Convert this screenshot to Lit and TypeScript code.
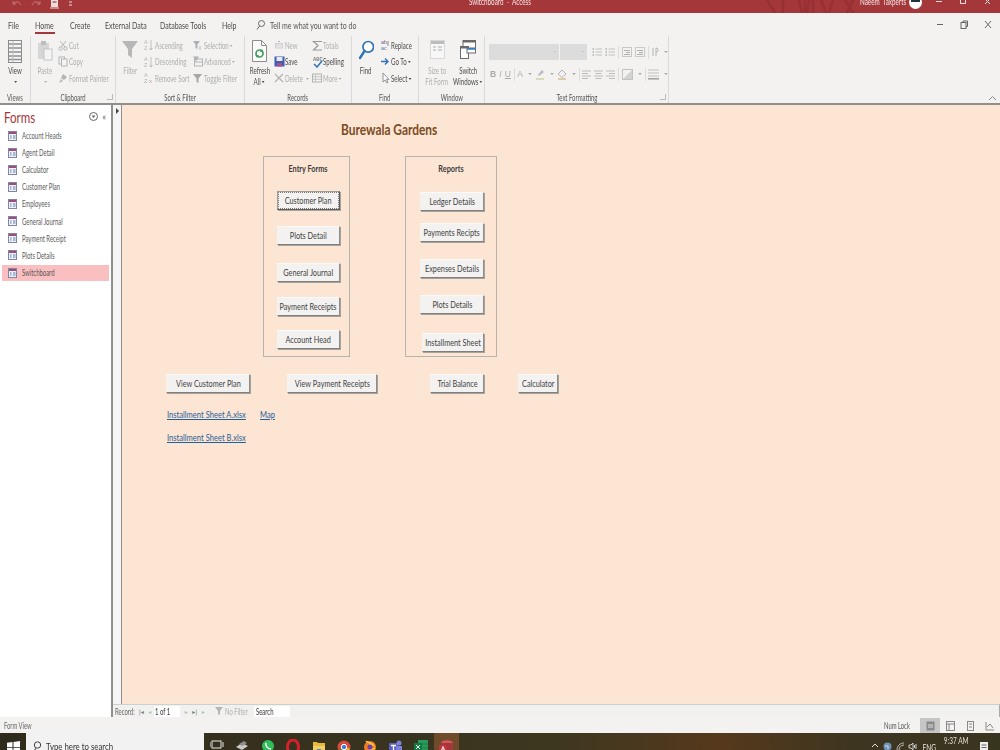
import { LitElement, html, css, svg } from "lit";
import { customElement } from "lit/decorators.js";

const s = (w: number, h: number, body: unknown, cls = "") =>
  html`<svg class=${cls} width=${w} height=${h} viewBox="0 0 ${w} ${h}" fill="none">${body}</svg>`;

const G = "#b4b4b4";
const B = "#2f74b5";

const icons: Record<string, () => unknown> = {
  view: () => s(14, 23, svg`<rect x=".5" y=".5" width="13" height="22" fill="#f4f4f4" stroke="#8c8c8c"/>
    <path d="M1 4h12M1 8h12M1 12h12M1 16h12M1 19.500h12" stroke="#8f8f8f" stroke-width="1.400"/><path d="M5 1v21" stroke="#bbb"/>`),
  paste: () => s(16, 21, svg`<rect x="1" y="3" width="11" height="16" fill="#d6d6d6"/><rect x="4" y="1" width="5" height="4" fill="#bdbdbd"/>
    <rect x="7" y="9" width="8" height="11" fill="#f4f4f4" stroke="#c4c4c4"/>`),
  cut: () => s(10, 11, svg`<path d="M2 1l5 6M8 1L3 7" stroke=${G}/><circle cx="2.500" cy="8.500" r="1.700" stroke=${G}/><circle cx="7.500" cy="8.500" r="1.700" stroke=${G}/>`),
  copy: () => s(10, 11, svg`<rect x="1" y="1" width="5.500" height="7" stroke=${G} fill="#f4f4f4"/><rect x="3.500" y="3" width="5.500" height="7" stroke=${G} fill="#f4f4f4"/>`),
  painter: () => s(10, 11, svg`<path d="M5 1l4 3-3 3-3-2zM3 6L1 10l4-2" fill=${G}/>`),
  funnel: () => s(16, 19, svg`<path d="M0 1h16l-6 8v9l-4-3V9z" fill="#b7b7b7"/>`),
  asc: () => s(9, 12, svg`<text x="0" y="5" font-size="5.500" fill=${G} font-family="Liberation Sans">A</text><text x="0" y="11" font-size="5.500" fill=${G} font-family="Liberation Sans">Z</text><path d="M7 1v10M5.500 9L7 11l1.500-2" stroke=${G} stroke-width=".8"/>`),
  rsort: () => s(9, 12, svg`<text x="0" y="5" font-size="5.500" fill=${G} font-family="Liberation Sans">A</text><text x="0" y="11" font-size="5.500" fill=${G} font-family="Liberation Sans">Z</text><path d="M5 8l3 3M8 8l-3 3" stroke="#cfa9a9" stroke-width=".8"/>`),
  sel: () => s(9, 11, svg`<path d="M0 1h7L4.500 4.500V9l-2-1V4.500z" fill="#aab0b8"/><path d="M7 6v4" stroke=${G}/>`),
  adv: () => s(10, 11, svg`<rect x="1.500" y="3" width="8" height="7" stroke=${G}/><path d="M0 .5h6L3.500 4v2L2.500 5V4z" fill="#aab0b8"/><path d="M1.500 6h8" stroke=${G}/>`),
  tog: () => s(9, 11, svg`<path d="M0 1h9L5.500 5.500V10l-2-1V5.500z" fill="#a6a6a6"/>`),
  refresh: () => s(15, 22, svg`<path d="M.5.500h9l5 5v16H.5z" fill="#fafafa" stroke="#8e8e8e"/><path d="M9.500.500v5h5" stroke="#8e8e8e"/>
    <circle cx="7.500" cy="13.500" r="3.500" stroke="#3f9d59" stroke-width="1.700"/><path d="M10 9l1.500 3H8zM5 18l-1.500-3H7z" fill="#3f9d59"/>`),
  snew: () => s(10, 10, svg`<rect x="1" y="3" width="8" height="5.500" fill="#d0d0d0"/><path d="M2 5h6M2 7h6" stroke="#f2f2f2"/><path d="M4 1.500h2" stroke=${G}/>`),
  save: () => s(11, 11, svg`<rect x=".5" y=".5" width="10" height="10" fill="#3d5fb0"/><rect x="2.500" y="1" width="6" height="4" fill="#e8e8f4"/><rect x="3" y="7" width="5" height="3.500" fill="#b24d8f"/>`),
  del: () => s(10, 10, svg`<path d="M1 1l8 8M9 1L1 9" stroke="#b0b0b0" stroke-width="1.100"/>`),
  more: () => s(10, 10, svg`<rect x=".5" y="1" width="9" height="8" stroke=${G}/><path d="M.5 3.700h9M.5 6.300h9M3.500 1v8" stroke=${G} stroke-width=".7"/>`),
  sigma: () => s(11, 11, svg`<path d="M10 1.500H1.500L6 5.500l-4.500 4.500H10" stroke="#9a9a9a" stroke-width="1.200"/>`),
  spell: () => s(11, 12, svg`<text x="1" y="4.500" font-size="4.500" fill="#777" font-weight="700" font-family="Liberation Sans">ABC</text><path d="M2 8l3 3 5-6" stroke="#2f74b5" stroke-width="1.500"/>`),
  find: () => s(15, 20, svg`<circle cx="9.200" cy="6.800" r="5.300" stroke=${B} stroke-width="1.700" fill="#fff"/><path d="M5.500 11L1 18" stroke=${B} stroke-width="2.400" stroke-linecap="round"/>`),
  replace: () => s(10, 12, svg`<text x="1" y="5" font-size="5.500" fill="#7a5a8a" font-family="Liberation Sans">ab</text><text x="1" y="11" font-size="5.500" fill="#5b7fa8" font-family="Liberation Sans">ac</text><path d="M8 2v5" stroke="#888"/>`),
  goto: () => s(10, 9, svg`<path d="M1 4.500h7M5 1.500l3 3-3 3" stroke=${B} stroke-width="1.400"/>`),
  select: () => s(10, 12, svg`<path d="M3 1v9l2.300-2 1.500 3 1.200-.6-1.400-3H9z" fill="#fafafa" stroke="#7c7c7c" stroke-width=".8"/>`),
  fit: () => s(15, 19, svg`<rect x=".5" y=".5" width="14" height="18" fill="#f7f7f7" stroke="#bbb" stroke-dasharray="1 1"/><rect x="1" y="1" width="13" height="3" fill="#bcbcbc"/><path d="M3 7h3M8 7h4M3 10h3M8 10h4" stroke="#c6c6c6" stroke-width="1.300"/>`),
  sw: () => s(16, 19, svg`<rect x="3" y=".5" width="12.500" height="8" fill="#fff" stroke="#6a6a6a"/><rect x="3" y=".5" width="12.500" height="2" fill="#6a6a6a"/>
    <rect x=".5" y="6.500" width="8" height="12" fill="#fff" stroke="#6a6a6a"/><rect x=".5" y="6.500" width="8" height="2" fill="#6a6a6a"/><rect x="7" y="8" width="8.500" height="5" fill="#fff" stroke="#6a6a6a"/><rect x="7" y="8" width="8.500" height="1.800" fill="#3f7fc0"/>`),
  bul: () => s(10, 10, svg`<path d="M3.500 2H10M3.500 5H10M3.500 8H10" stroke="#c2c2c2"/><path d="M.5 2h1.500M.5 5h1.500M.5 8h1.500" stroke="#b0b0b0" stroke-width="1.300"/>`),
  ind: () => s(10, 10, svg`<rect x=".5" y=".5" width="9" height="9" stroke="#c8c8c8"/><path d="M2 3.500h6M4 5.500h4M2 7.500h6" stroke="#b0b0b0"/>`),
  rtl: () => s(7, 10, svg`<path d="M1 1v8M4 1v8M4 1c3 0 3 4 0 4" stroke="#b4b4b4"/>`),
  bucket: () => s(10, 11, svg`<path d="M5 1l4 4-4 3.500L1 5z" stroke="#b4b4b4"/><path d="M1 10h8" stroke="#d7c089" stroke-width="1.500"/>`),
  hl: () => s(10, 11, svg`<path d="M3 6l4-5 2 2-5 4z" fill="#b8b8b8"/><path d="M1 10h8" stroke="#cfd3a4" stroke-width="1.500"/>`),
  alignl: () => s(9, 9, svg`<path d="M0 1h9M0 3.500h6M0 6h9M0 8.500h6" stroke="#bcbcbc"/>`),
  alignc: () => s(9, 9, svg`<path d="M0 1h9M1.500 3.500h6M0 6h9M1.500 8.500h6" stroke="#bcbcbc"/>`),
  alignr: () => s(9, 9, svg`<path d="M0 1h9M3 3.500h6M0 6h9M3 8.500h6" stroke="#bcbcbc"/>`),
  fillg: () => s(11, 11, svg`<rect x=".5" y=".5" width="10" height="10" stroke="#c2c2c2"/><path d="M1 10l9-9v9z" fill="#d2d2d2"/>`),
  grid: () => s(11, 11, svg`<path d="M0 1h11M0 4h11M0 7h11" stroke="#c0c0c0"/><path d="M0 9.800h11" stroke="#9e9e9e" stroke-width="1.500"/>`),
  form: () => s(9, 10, svg`<rect x=".5" y=".5" width="8" height="9" fill="#eef1f6" stroke="#7f84a8"/><rect x="1" y="1" width="7" height="2" fill="#a04d75"/><path d="M2 5h1.500M5 5h2.500M2 7h1.500M5 7h2.500" stroke="#5e7fb4"/>`),
  win: () => s(13, 13, svg`<path d="M0 1.800l5.500-.8v5.200H0zM6.500.9L13 0v6.200H6.500zM0 7h5.500v5.200L0 11.400zM6.500 7H13v6l-6.500-.9z" fill="#fff"/>`),
};

const ic = (n: string) => icons[n]();
const car = html`<i class="car"></i>`;
/* The reference is squeezed horizontally, so each label is narrowed the same way. */
const q = (t: unknown) => html`<span class="q">${t}</span>`;
const qc = (t: unknown) => html`<span class="q qc">${t}</span>`;

const big = (icon: string, lines: unknown[], off = false) =>
  html`<div class="big ${off ? "off" : ""}"><div class="bigi">${ic(icon)}</div>${lines.map((l) => html`<div class="bl">${qc(l)}</div>`)}</div>`;
const small = (icon: string, label: unknown, off = true) =>
  html`<div class="sm ${off ? "off" : ""}"><span class="si">${ic(icon)}</span>${q(label)}</div>`;

type Ctl = { t: string; x: number; y: number; w: number; h: number; focus?: boolean };
const ORIGIN = { x: 122, y: 105 };
const buttons: Ctl[] = [
  { t: "Customer Plan", x: 277, y: 191, w: 63, h: 19, focus: true },
  { t: "Plots Detail", x: 277, y: 226, w: 63, h: 19 },
  { t: "General Journal", x: 277, y: 263, w: 63, h: 19 },
  { t: "Payment Receipts", x: 277, y: 297, w: 63, h: 19 },
  { t: "Account Head", x: 277, y: 330, w: 63, h: 19 },
  { t: "Ledger Details", x: 420, y: 192, w: 64, h: 19 },
  { t: "Payments Recipts", x: 420, y: 223, w: 64, h: 19 },
  { t: "Expenses Details", x: 420, y: 259, w: 64, h: 19 },
  { t: "Plots Details", x: 420, y: 295, w: 64, h: 19 },
  { t: "Installment Sheet", x: 422, y: 333, w: 62, h: 19 },
  { t: "View Customer Plan", x: 166, y: 374, w: 84, h: 19 },
  { t: "View Payment Receipts", x: 287, y: 374, w: 90, h: 19 },
  { t: "Trial Balance", x: 430, y: 374, w: 54, h: 19 },
  { t: "Calculator", x: 518, y: 374, w: 40, h: 19 },
];
const links = [
  { t: "Installment Sheet A.xlsx", x: 167, y: 408 },
  { t: "Map", x: 260, y: 408 },
  { t: "Installment Sheet B.xlsx", x: 167, y: 431 },
];
const pos = (c: { x: number; y: number; w?: number; h?: number }) =>
  `left:${c.x - ORIGIN.x}px;top:${c.y - ORIGIN.y}px;${c.w ? `width:${c.w}px;` : ""}${c.h ? `height:${c.h}px;` : ""}`;

const forms = ["Account Heads", "Agent Detail", "Calculator", "Customer Plan", "Employees", "General Journal", "Payment Receipt", "Plots Details", "Switchboard"];
const tabNames = [
  { t: "File", w: 12 },
  { t: "Home", w: 20, on: true },
  { t: "Create", w: 20 },
  { t: "External Data", w: 40 },
  { t: "Database Tools", w: 47 },
  { t: "Help", w: 15 },
];

const task = [
  svg`<rect x="2" y="2" width="9" height="7" stroke="#e8e8e8"/><path d="M0 3v5M13 3v5M2 12h9" stroke="#e8e8e8"/>`,
  svg`<path d="M1 8l6-4 6 3-6 4z" fill="#c9c9c9"/><path d="M4 5l5-3 3 2-5 3z" fill="#8d8d8d"/>`,
  svg`<circle cx="7" cy="7" r="6" fill="#2fbf5a"/><path d="M5 4c-1 3 2 6 5 6" stroke="#fff" stroke-width="1.500"/>`,
  svg`<ellipse cx="7" cy="8" rx="5.500" ry="7" stroke="#d5202c" stroke-width="3"/>`,
  svg`<path d="M1 3h4l1 1h7v10H1z" fill="#e9b93d"/><rect x="1" y="7" width="12" height="7" fill="#f3cf6a"/><rect x="5" y="10" width="4" height="3" fill="#3f8fb5"/>`,
  svg`<circle cx="7" cy="8" r="6.500" fill="#d9483b"/><path d="M7 8L1.500 11.500A6.500 6.500 0 0 0 9 14z" fill="#3da04f"/><path d="M7 8l6 1.500A6.500 6.500 0 0 1 9 14z" fill="#e8b930"/><circle cx="7" cy="8" r="2.700" fill="#3f7fd8" stroke="#fff"/>`,
  svg`<circle cx="7" cy="8" r="6" fill="#f07c22"/><path d="M3 2c1 2 5 1 7 4-2-1-4 0-4 2s3 3 6 1" stroke="#ffcf3f" stroke-width="1.500"/><circle cx="7" cy="8" r="2.500" fill="#6c3fb5"/>`,
  svg`<rect x="1" y="4" width="9" height="9" fill="#5a5fc0"/><circle cx="11" cy="4" r="2.500" fill="#7d83db"/><rect x="8" y="7" width="6" height="7" fill="#7d83db"/><path d="M3 6.500h5M5.500 6.500V11" stroke="#fff" stroke-width="1.300"/>`,
  svg`<rect x="4" y="1" width="10" height="13" fill="#2a9a5c"/><path d="M4 5h10M4 9h10" stroke="#1d7a45"/><rect x="0" y="4" width="8" height="8" fill="#107c41"/><path d="M2 6l4 4M6 6l-4 4" stroke="#fff"/>`,
  svg`<ellipse cx="8" cy="4" rx="6" ry="2.800" fill="#d9555e"/><rect x="2" y="4" width="12" height="10" fill="#a4373a"/><rect x="0" y="6" width="8" height="8" fill="#c0353d"/><path d="M2 12.500L4 7.500l2 5M3 11h2" stroke="#fff" stroke-width=".9"/>`,
];

@customElement("app-root")
export class AppRoot extends LitElement {
  static styles = css`
    :host { display: block; width: 1000px; height: 750px; overflow: hidden; background: #f3f2f1; }
    * { box-sizing: border-box; }
    svg { flex: none; }
    .app {
      width: 1000px; height: 750px; display: flex; flex-direction: column; overflow: hidden;
      font-family: Lato, "Open Sans", sans-serif; font-size: 9px; color: #4c4c4c;
      filter: blur(0.3px);
    }
    .q {
      display: inline-block; white-space: nowrap; font-size: var(--f, 9px); transform: scaleX(var(--k, .68));
      transform-origin: left center; flex: none;
    }
    .qc { transform-origin: center; }
    .title {
      --f: 9px; --k: .7;
      height: 13px; flex: none; background: #a4373a; color: #f6e6e6; position: relative; overflow: hidden;
      display: flex; align-items: flex-start; line-height: 10px;
    }
    .qat { width: 469px; flex: none; display: flex; gap: 9px; padding-left: 12px; align-items: flex-start; }
    .tt { width: 391px; flex: none; margin-top: -3px; white-space: nowrap; }
    .user { width: 49px; flex: none; margin-top: -3px; white-space: nowrap; }
    .avatar { width: 13px; height: 13px; border-radius: 50%; background: #fff; margin-top: -4px; flex: none; position: relative; overflow: hidden; }
    .avatar::before { content: ""; position: absolute; left: 2px; right: 2px; top: 3px; height: 3px; background: #27323f; }
    .ctl { margin-left: 13px; display: flex; gap: 16px; }
    .deco { position: absolute; left: 763px; top: 0; }
    .tabs { --f: 10px; --k: .7; height: 23px; flex: none; display: flex; align-items: center; padding: 0 0 0 8px; gap: 15px; position: relative; }
    .tab { flex: none; }
    .tab.on { display: flex; align-items: center; padding-top: 3px; border-bottom: 2px solid #a4373a; height: 19px; }
    .tell { display: flex; align-items: center; gap: 5px; margin-left: 4px; color: #555; }
    .wc { margin-left: auto; padding-right: 8px; display: flex; gap: 16px; align-items: center; }
    .wc svg { display: block; }
    .ribbon { height: 69px; flex: none; display: flex; border-bottom: 2px solid #8f8f8b; position: relative; }
    .collapse { position: absolute; right: 3px; bottom: 2px; }
    .grp { display: flex; flex-direction: column; border-right: 1px solid #dadada; flex: none; }
    .gb { flex: 1; display: flex; min-height: 0; }
    .gl { height: 11px; flex: none; text-align: center; line-height: 11px; position: relative; color: #555; --k: .66; }
    .launch { position: absolute; right: 2px; top: 2px; width: 6px; height: 6px; border: 1px solid #bbb; border-width: 0 1px 1px 0; }
    .g-views { width: 31px; } .g-clip { width: 85px; } .g-sort { width: 129px; } .g-rec { width: 107px; }
    .g-find { width: 67px; } .g-win { width: 66px; } .g-fmt { width: 184px; }
    .big { display: flex; flex-direction: column; align-items: center; line-height: 11px; width: 100%; }
    .bigi { height: 24.500px; margin-top: 4px; display: flex; align-items: flex-start; }
    .bl { white-space: nowrap; display: flex; justify-content: center; height: 11px; }
    .off { color: #aeaeae; }
    .car { display: inline-block; width: 0; height: 0; border: 2.200px solid transparent; border-top-color: currentColor; border-bottom-width: 0; margin: 0 0 1px 2px; vertical-align: middle; }
    .col { display: flex; flex-direction: column; padding-top: 1px; flex: none; }
    .sm { height: 16.500px; display: flex; align-items: center; white-space: nowrap; }
    .si { width: 10.500px; flex: none; display: flex; align-items: center; }
    .views .big { width: 30px; }
    .p-clip { width: 27px; flex: none; }
    .p-sort { width: 28px; flex: none; } .c-s1 { width: 49px; } .c-s2 { width: 50px; }
    .p-ref { width: 29px; flex: none; } .c-r1 { width: 38px; } .c-r2 { width: 38px; }
    .p-find { width: 28px; flex: none; } .p-fit { width: 30px; margin-left: 3px; flex: none; } .p-sw { width: 32px; flex: none; }
    .fmt { display: flex; flex-direction: column; padding: 8px 0 0 4px; gap: 6px; }
    .fr { display: flex; align-items: center; height: 16px; gap: 3px; color: #aaa; }
    .combo { height: 16px; background: #dcdcdc; border-right: 1px solid #f3f3f3; position: relative; }
    .combo::after { content: ""; position: absolute; right: 3px; top: 7px; border: 1.500px solid transparent; border-top-color: #b0b0b0; border-bottom-width: 0; }
    .c1 { width: 73px; } .c2 { width: 29px; margin: 0 1px 0 -3px; }
    .sep { width: 1px; height: 13px; background: #dcdcdc; }
    .ft { font-size: 8.500px; width: 8px; text-align: center; font-family: "Liberation Sans", sans-serif; }
    .ft1 { margin-left: 1px; }
    .main { flex: 1; min-height: 0; display: flex; }
    .nav { --k: .66; width: 111px; flex: none; background: #fff; display: flex; flex-direction: column; padding: 0 2px; }
    .nh { height: 22px; flex: none; display: flex; align-items: center; justify-content: space-between; padding: 1px 3px 0 2px; color: #a4373a; --f: 16px; --k: .72; }
    .nc { display: flex; align-items: center; gap: 4px; color: #666; font-size: 9px; }
    .ni { height: 17.100px; display: flex; align-items: center; gap: 5px; padding-left: 6px; color: #5a5a5a; flex: none; }
    .ni.on { background: #fabfc0; height: 16px; color: #555; margin-top: 1px; }
    .work { flex: 1; min-width: 0; display: flex; flex-direction: column; border-left: 2px solid #8f8f8b; }
    .wt { flex: 1; display: flex; min-height: 0; }
    .shut { width: 9px; flex: none; background: #f5f5f5; border-right: 1px solid #8f8f8f; padding: 3px 0 0 3px; }
    .shut i { display: block; width: 0; height: 0; border: 3.500px solid transparent; border-left: 3.500px solid #444; border-right-width: 0; }
    .canvas { flex: 1; position: relative; background: #fde5d3; min-width: 0; }
    .h1 { position: absolute; font-size: 14.500px; font-weight: 700; color: #7a4b23; white-space: nowrap; line-height: 16px; transform: scaleX(.82); transform-origin: left center; }
    .box { position: absolute; border: 1px solid #b8b2ac; }
    .cap { position: absolute; font-weight: 700; color: #3c3c3c; transform: translateX(-50%) scaleX(.73); white-space: nowrap; font-size: 10px; line-height: 11px; }
    .btn {
      --f: 10px; --k: .73;
      position: absolute; background: #f3f2f1; display: flex; align-items: center; justify-content: center; white-space: nowrap; padding-bottom: 2px;
      border: 1px solid; border-color: #fbfaf8 #8d8d8d #7f7f7f #f6f3ef; box-shadow: 1px 1px 0 #a8a29c; color: #3f3f3f;
    }
    .btn.fc { outline: 1px dotted #777; outline-offset: -2px; border-color: #9c9c9c #5f5f5f #5f5f5f #9c9c9c; }
    .lnk { position: absolute; color: #1f5f9c; text-decoration: underline; white-space: nowrap; line-height: 12px; font-size: 10px; transform: scaleX(.757); transform-origin: left center; }
    .rec { --k: .66; height: 13px; flex: none; background: #f1f1f0; border-top: 1px solid #cfcfcf; display: flex; align-items: center; padding-left: 2px; color: #666; border-right: 1px solid #aaa; white-space: nowrap; }
    .rl { width: 22px; flex: none; }
    .rb { width: 8.500px; flex: none; text-align: center; color: #777; font-size: 6px; font-family: "DejaVu Sans", sans-serif; }
    .rb.f { color: #bbb; }
    .pg { width: 26px; flex: none; margin-right: 2px; background: #fff; height: 11px; line-height: 11px; padding-left: 1px; color: #333; }
    .nf { color: #b0b0b0; display: flex; align-items: center; gap: 1px; width: 37px; flex: none; margin: 0 2.500px 0 7px; }
    .srch { background: #fff; width: 36px; flex: none; height: 11px; line-height: 11px; padding-left: 2px; color: #333; }
    .status { --k: .65; height: 15px; flex: none; display: flex; align-items: center; padding-left: 4px; color: #666; margin-top: 1px; background: #f3f2f1; }
    .num { margin-left: auto; width: 36px; color: #555; flex: none; }
    .vb { width: 20px; height: 15px; display: flex; align-items: center; justify-content: center; flex: none; }
    .vb.on { background: #c6c6c6; }
    .task {
      height: 17px; flex: none; display: flex; position: relative; overflow: hidden; align-items: flex-start;
      background: linear-gradient(90deg, #2f2c1c 0, #3d3720 55%, #56391c 72%, #3e3520 85%, #38351f 100%); color: #e6e3da;
    }
    .start { width: 26px; height: 17px; flex: none; display: flex; justify-content: center; padding-top: 8px; }
    .search { --f: 10px; --k: .78; width: 178px; height: 17px; flex: none; background: #f2f2f2; color: #333; display: flex; align-items: flex-start; padding: 8px 0 0 7px; gap: 4px; line-height: 10px; }
    .apps { display: flex; }
    .app-i { width: 25.500px; height: 17px; padding-top: 6px; display: flex; justify-content: center; flex: none; }
    .app-i.on { background: #6f4b2c; }
    .tray { --k: .72; margin-left: auto; display: flex; align-items: flex-start; height: 17px; }
    .tri { width: 12.500px; padding-top: 9px; display: flex; justify-content: center; flex: none; }
    .eng { width: 20px; padding-top: 9px; text-align: center; flex: none; }
    .time { width: 34px; padding-top: 3px; line-height: 10px; text-align: center; flex: none; }
    .note { padding: 8px 11px 0 6px; flex: none; }
  `;

  render() {
    return html`<div class="app">
      ${this.titleBar()}
      ${this.tabs()}
      ${this.ribbon()}
      <div class="main">
        ${this.nav()}
        <div class="work">
          <div class="wt">
            <div class="shut"><i></i></div>
            ${this.canvas()}
          </div>
          ${this.rec()}
        </div>
      </div>
      ${this.status()}
      ${this.taskbar()}
    </div>`;
  }

  titleBar() {
    return html`<div class="title">
      <svg class="deco" width="95" height="13" viewBox="0 0 95 13" fill="none">
        <path d="M4 0l8 13M20 0v13M36 0l3 13M42 0v13M46 0l-2 13M50 0v13M58 0l5 13M70 0l-4 13M82 0l8 13M90 0l-6 13" stroke="#982f33" stroke-width="2.500"/>
      </svg>
      <div class="qat">
        ${s(10, 8, svg`<path d="M1 4c2-3 6-3 8 1M1 1v3h3" stroke="#c47a7c"/>`)}
        ${s(10, 8, svg`<path d="M9 4C7 1 3 1 1 5M9 1v3H6" stroke="#c47a7c"/>`)}
        ${s(9, 9, svg`<rect x="1" y="0" width="7" height="7" fill="#f0dada"/><path d="M2.500 2h4" stroke="#7d2a2c"/><path d="M0 8h9" stroke="#f0dada"/>`)}
        ${s(5, 8, svg`<path d="M1 2h3M1 5h3" stroke="#f0dada"/>`)}
      </div>
      <div class="tt">${q(html`Switchboard&nbsp; -&nbsp; Access`)}</div>
      <div class="user">${q(html`Naeem&nbsp; Taxperts`)}</div>
      <div class="avatar"></div>
      <div class="ctl">
        ${s(8, 5, svg`<path d="M1 1.500h6" stroke="#f1dede"/>`)}
        ${s(8, 5, svg`<path d="M1.500 0v3.500h5V0" stroke="#f1dede"/>`)}
        ${s(8, 5, svg`<path d="M2 -1l5 5M7 -1L2 4" stroke="#f1dede"/>`)}
      </div>
    </div>`;
  }

  tabs() {
    return html`<div class="tabs">
      ${tabNames.map((t) => html`<div class="tab ${t.on ? "on" : ""}" style="width:${t.w}px">${q(t.t)}</div>`)}
      <div class="tell">
        ${s(9, 10, svg`<circle cx="5.500" cy="3.500" r="3" stroke="#666"/><path d="M3.500 6L1 9.500" stroke="#666"/>`)}
        ${q("Tell me what you want to do")}
      </div>
      <div class="wc">
        ${s(8, 9, svg`<path d="M1 4.500h6" stroke="#666"/>`)}
        ${s(8, 9, svg`<rect x="1" y="2.500" width="5" height="6" stroke="#666"/><path d="M3 2.500V1h4.500v5.500H6" stroke="#666"/>`)}
        ${s(8, 9, svg`<path d="M1 1l6 7M7 1L1 8" stroke="#666"/>`)}
      </div>
    </div>`;
  }

  ribbon() {
    return html`<div class="ribbon">
      <div class="grp g-views"><div class="gb views">${big("view", ["View", car])}</div><div class="gl">${qc("Views")}</div></div>

      <div class="grp g-clip">
        <div class="gb">
          <div class="p-clip">${big("paste", ["Paste", car], true)}</div>
          <div class="col">
            ${small("cut", "Cut")}${small("copy", "Copy")}${small("painter", "Format Painter")}
          </div>
        </div>
        <div class="gl">${qc("Clipboard")}<i class="launch"></i></div>
      </div>

      <div class="grp g-sort">
        <div class="gb">
          <div class="p-sort">${big("funnel", ["Filter"], true)}</div>
          <div class="col c-s1">${small("asc", "Ascending")}${small("asc", "Descending")}${small("rsort", "Remove Sort")}</div>
          <div class="col c-s2">
            ${small("sel", html`Selection${car}`)}${small("adv", html`Advanced${car}`)}${small("tog", "Toggle Filter")}
          </div>
        </div>
        <div class="gl">${qc("Sort & Filter")}</div>
      </div>

      <div class="grp g-rec">
        <div class="gb">
          <div class="p-ref">${big("refresh", ["Refresh", html`All${car}`])}</div>
          <div class="col c-r1">${small("snew", "New")}${small("save", "Save", false)}${small("del", html`Delete ${car}`)}</div>
          <div class="col c-r2">${small("sigma", "Totals")}${small("spell", "Spelling", false)}${small("more", html`More${car}`)}</div>
        </div>
        <div class="gl">${qc("Records")}</div>
      </div>

      <div class="grp g-find">
        <div class="gb">
          <div class="p-find">${big("find", ["Find"])}</div>
          <div class="col">${small("replace", "Replace", false)}${small("goto", html`Go To${car}`, false)}${small("select", html`Select${car}`, false)}</div>
        </div>
        <div class="gl">${qc("Find")}</div>
      </div>

      <div class="grp g-win">
        <div class="gb">
          <div class="p-fit">${big("fit", ["Size to", "Fit Form"], true)}</div>
          <div class="p-sw">${big("sw", ["Switch", html`Windows${car}`])}</div>
        </div>
        <div class="gl">${qc("Window")}</div>
      </div>

      <div class="grp g-fmt">
        <div class="gb fmt">
          <div class="fr">
            <div class="combo c1"></div><div class="combo c2"></div>
            ${ic("bul")}${ic("bul")}<span class="sep"></span>${ic("ind")}${ic("ind")}<span class="sep"></span>${ic("rtl")}${car}
          </div>
          <div class="fr">
            <b class="ft ft1">B</b><i class="ft">I</i><u class="ft">U</u><span class="sep"></span>
            <span class="ft">A</span>${car}${ic("hl")}${car}${ic("bucket")}${car}<span class="sep"></span>
            ${ic("alignl")}${ic("alignc")}${ic("alignr")}<span class="sep"></span>${ic("fillg")}${car}<span class="sep"></span>${ic("grid")}${car}
          </div>
        </div>
        <div class="gl">${qc("Text Formatting")}<i class="launch"></i></div>
      </div>
      ${s(9, 6, svg`<path d="M1 5l3.500-3.500L8 5" stroke="#888"/>`, "collapse")}
    </div>`;
  }

  nav() {
    return html`<div class="nav">
      <div class="nh">
        ${q("Forms")}
        <div class="nc">
          ${s(9, 9, svg`<circle cx="4.500" cy="4.500" r="4" stroke="#666"/><path d="M2.500 3.500l2 2.500 2-2.500" fill="#666"/>`)}
          <span>«</span>
        </div>
      </div>
      ${forms.map((f, i) => html`<div class="ni ${i === forms.length - 1 ? "on" : ""}">${ic("form")}${q(f)}</div>`)}
    </div>`;
  }

  canvas() {
    return html`<div class="canvas">
      <div class="h1" style=${pos({ x: 341, y: 122 })}>Burewala Gardens</div>
      <div class="box" style=${pos({ x: 263, y: 156, w: 87, h: 201 })}></div>
      <div class="box" style=${pos({ x: 405, y: 156, w: 92, h: 201 })}></div>
      <div class="cap" style=${pos({ x: 308, y: 163 })}>Entry Forms</div>
      <div class="cap" style=${pos({ x: 451, y: 163 })}>Reports</div>
      ${buttons.map((b) => html`<div class="btn ${b.focus ? "fc" : ""}" style=${pos(b)}>${qc(b.t)}</div>`)}
      ${links.map((l) => html`<div class="lnk" style=${pos(l)}>${l.t}</div>`)}
    </div>`;
  }

  rec() {
    return html`<div class="rec">
      <span class="rl">${q("Record:")}</span>
      <span class="rb">|◂</span><span class="rb f">◂</span>
      <span class="pg">${q("1 of 1")}</span>
      <span class="rb f">▸</span><span class="rb">▸|</span><span class="rb f">▸</span>
      <span class="nf">${s(9, 10, svg`<path d="M0 1h8L5 5v4L3 8V5z" fill="#b5b5b5"/>`)}${q("No Filter")}</span>
      <span class="srch">${q("Search")}</span>
    </div>`;
  }

  status() {
    return html`<div class="status">
      ${q("Form View")}
      <span class="num">${q("Num Lock")}</span>
      <div class="vb on">${s(9, 10, svg`<rect x=".5" y=".5" width="8" height="9" fill="#8a8a8a"/><path d="M2 4h5M2 6h5" stroke="#ddd"/>`)}</div>
      <div class="vb">${s(9, 10, svg`<rect x=".5" y=".5" width="8" height="9" stroke="#888"/><path d="M.5 3h8M3 3v7" stroke="#888"/>`)}</div>
      <div class="vb">${s(9, 10, svg`<rect x="1.500" y=".5" width="6" height="9" stroke="#888"/><path d="M3 3h3M3 6h3" stroke="#888"/>`)}</div>
      <div class="vb">${s(10, 10, svg`<path d="M1 1v8h8M2 6l3-3 3 4" stroke="#888"/>`)}</div>
    </div>`;
  }

  taskbar() {
    return html`<div class="task">
      <div class="start">${ic("win")}</div>
      <div class="search">
        ${s(9, 11, svg`<circle cx="4.500" cy="4" r="3.200" stroke="#444"/><path d="M3 7L1 10" stroke="#444"/>`)}
        ${q("Type here to search")}
      </div>
      <div class="apps">
        ${task.map((t, i) => html`<div class="app-i ${i === task.length - 1 ? "on" : ""}">${s(14, 15, t)}</div>`)}
      </div>
      <div class="tray">
        <div class="tri">${s(8, 6, svg`<path d="M1 5l3-3 3 3" stroke="#ddd"/>`)}</div>
        <div class="tri">${s(9, 9, svg`<circle cx="4.500" cy="4.500" r="4" fill="#6d93b8"/><path d="M2 4h3v3" stroke="#ddd"/>`)}</div>
        <div class="tri">${s(9, 9, svg`<path d="M1 8c0-4 3-7 7-7M3 8c0-3 2-5 5-5" stroke="#bbb"/>`)}</div>
        <div class="tri">${s(9, 9, svg`<path d="M1 3h2l2-2v7L3 6H1zM6.500 3v3M8 2v5" stroke="#ccc"/>`)}</div>
        <span class="eng">${qc("ENG")}</span>
        <span class="time">${qc("9:37 AM")}</span>
        <div class="note">${s(10, 12, svg`<rect x="1" y="1" width="8" height="11" fill="#eee"/><path d="M2.500 4h5M2.500 6.500h5" stroke="#666"/>`)}</div>
      </div>
    </div>`;
  }
}
